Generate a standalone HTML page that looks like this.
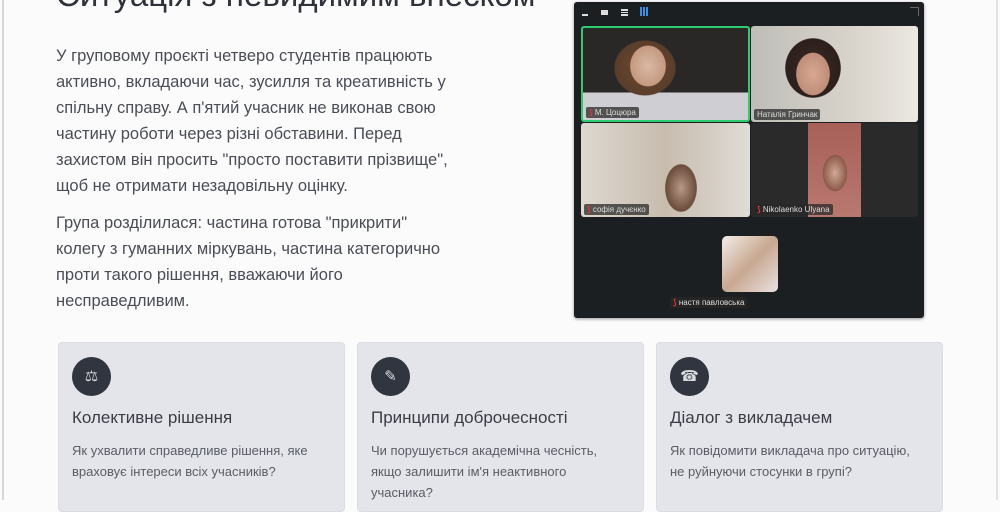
<!DOCTYPE html>
<html><head><meta charset="utf-8"><style>
*{margin:0;padding:0;box-sizing:border-box}
body{width:1000px;height:500px;overflow:hidden;background:#fbfbfc;font-family:"Liberation Sans","DejaVu Sans",sans-serif;position:relative}
.bl{position:absolute;left:2px;top:0;width:2px;height:500px;background:#d6d7da}
.br{position:absolute;left:996px;top:0;width:2px;height:500px;background:#e2e3e6}
h1{position:absolute;left:56px;top:-24px;font-size:33px;font-weight:normal;color:#2f323a;white-space:nowrap}
.p{position:absolute;left:56px;width:420px;font-size:16.5px;line-height:26px;color:#4a4d56}
.vid{position:absolute;left:574px;top:2px;width:350px;height:316px;background:#1c1f22;border-radius:3px;box-shadow:0 1px 3px rgba(0,0,0,.4)}
.t{position:absolute;overflow:hidden}
.lab{position:absolute;left:3px;bottom:2px;background:rgba(40,40,40,.75);color:#ddd;font-size:8px;padding:1px 3px;border-radius:2px;white-space:nowrap}
.lab i{color:#e33;font-style:normal;font-weight:bold}
.card{position:absolute;top:342px;width:287px;height:170px;background:#e4e5ea;border-radius:4px;border:1px solid #dcdde2}
.ic{position:absolute;left:13px;top:14px;width:39px;height:39px;border-radius:50%;background:#31353f;color:#d8d9dd;font-size:15px;text-align:center;line-height:39px}
.ct{position:absolute;left:13px;top:65px;font-size:17px;color:#3a3d45;white-space:nowrap}
.cd{position:absolute;left:13px;top:97px;width:240px;font-size:13px;line-height:21px;color:#5a5d66}
</style></head><body>
<div class="bl"></div><div class="br"></div>
<h1>Ситуація з невидимим внеском</h1>
<div class="p" style="top:43px">У груповому проєкті четверо студентів працюють активно, вкладаючи час, зусилля та креативність у спільну справу. А п'ятий учасник не виконав свою частину роботи через різні обставини. Перед захистом він просить "просто поставити прізвище", щоб не отримати незадовільну оцінку.</div>
<div class="p" style="top:210px;width:395px">Група розділилася: частина готова "прикрити" колегу з гуманних міркувань, частина категорично проти такого рішення, вважаючи його несправедливим.</div>

<div class="vid">
 <div style="position:absolute;left:8px;top:12px;width:6px;height:2px;background:#ddd"></div>
 <div style="position:absolute;left:27px;top:8px;width:7px;height:5px;background:#ddd"></div>
 <div style="position:absolute;left:47px;top:7px;width:7px;height:7px;border-top:2px solid #ddd;border-bottom:2px solid #ddd;background:linear-gradient(#1c1f22 40%,#ddd 40%,#ddd 60%,#1c1f22 60%)"></div>
 <div style="position:absolute;left:66px;top:5px;width:9px;height:9px;background:repeating-linear-gradient(90deg,#3a8fe8 0 2px,transparent 2px 3px),#1c1f22"></div>
 <div style="position:absolute;left:336px;top:5px;width:9px;height:9px;border-top:1px solid #666;border-right:1px solid #666;transform:rotate(0)"></div>
 <div class="t" style="left:7px;top:24px;width:169px;height:96px;background:radial-gradient(ellipse 35px 40px at 65px 38px,#d9b8a4 0,#c49a80 50%,transparent 52%),radial-gradient(ellipse 50px 45px at 62px 40px,#6b4a32 0,#5a3e2a 60%,transparent 62%),linear-gradient(#2a2826,#2a2826 70%,#cfcfd3 70%);border:2px solid #2ecc71;border-radius:3px"><span class="lab"><i>⟆</i> М. Цоцюра</span></div>
 <div class="t" style="left:177px;top:24px;width:167px;height:96px;background:radial-gradient(ellipse 30px 38px at 62px 48px,#d6a892 0,#c08e78 55%,transparent 57%),radial-gradient(ellipse 42px 45px at 62px 42px,#3a2a26 0,#2c201c 65%,transparent 67%),linear-gradient(90deg,#bfbdb8,#d8d4cc 60%,#ece8e2);border-radius:3px"><span class="lab">Наталія Гринчак</span></div>
 <div class="t" style="left:7px;top:121px;width:169px;height:94px;background:radial-gradient(ellipse 28px 42px at 100px 65px,#b89886 0,#6a4c3c 55%,transparent 58%),linear-gradient(90deg,#ddd8d0,#c8bcae 50%,#e0dcd6);border-radius:3px"><span class="lab"><i>⟆</i> софія дучєнко</span></div>
 <div class="t" style="left:177px;top:121px;width:167px;height:94px;background:linear-gradient(90deg,#2a2a2a 0,#2a2a2a 34%,transparent 34%,transparent 66%,#2a2a2a 66%),radial-gradient(ellipse 20px 30px at 84px 50px,#d2a896 0,#8a5a48 60%,transparent 62%),linear-gradient(#a86058,#b87870);border-radius:3px"><span class="lab"><i>⟆</i> Nikolaenko Ulyana</span></div>
 <div class="t" style="left:148px;top:234px;width:56px;height:56px;border-radius:5px;background:linear-gradient(135deg,#f3ede8,#c8a890 50%,#e8e0e0)"></div>
 <span class="lab" style="left:96px;bottom:auto;top:295px"><i>⟆</i> настя павловська</span>
</div>

<div class="card" style="left:58px"><div class="ic">⚖</div><div class="ct">Колективне рішення</div><div class="cd">Як ухвалити справедливе рішення, яке враховує інтереси всіх учасників?</div></div>
<div class="card" style="left:357px"><div class="ic">✎</div><div class="ct">Принципи доброчесності</div><div class="cd">Чи порушується академічна чесність, якщо залишити ім'я неактивного учасника?</div></div>
<div class="card" style="left:656px"><div class="ic">☎</div><div class="ct">Діалог з викладачем</div><div class="cd">Як повідомити викладача про ситуацію, не руйнуючи стосунки в групі?</div></div>
</body></html>
